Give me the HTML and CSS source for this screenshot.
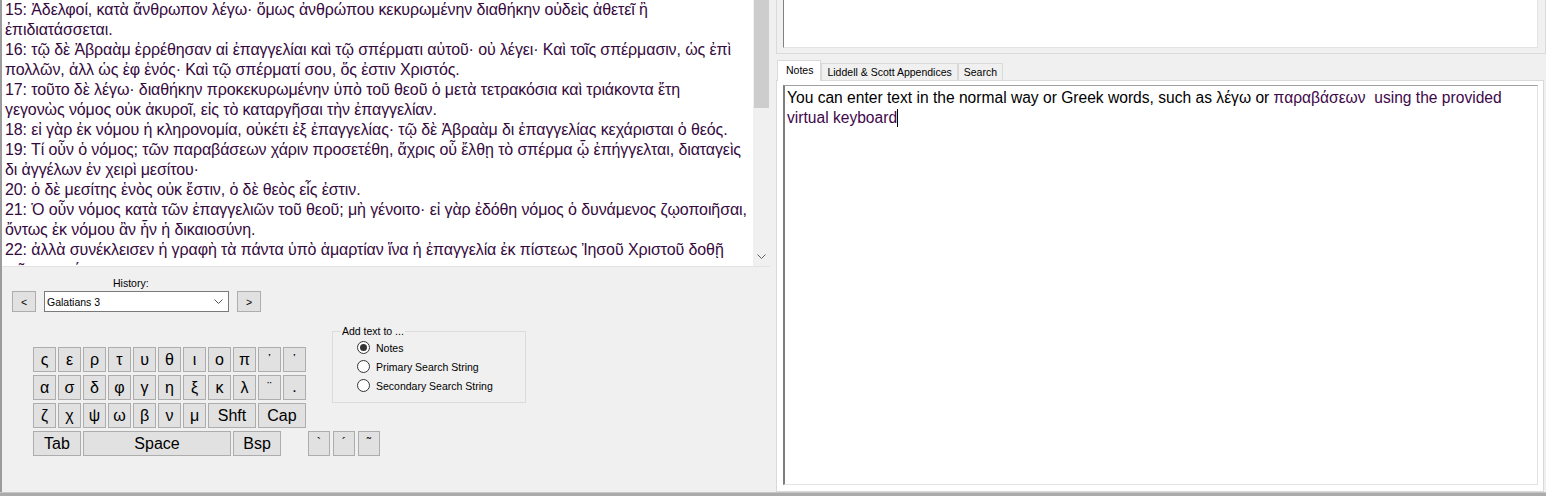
FILE: index.html
```html
<!DOCTYPE html>
<html lang="el">
<head>
<meta charset="utf-8">
<title>Greek Reader</title>
<link rel="stylesheet" href="styles.css">
</head>
<body>
<div class="window">
  <div class="main">
    <section class="left">
      <div class="reader">
        <div class="verses">
          <p>15: Ἀδελφοί, κατὰ ἄνθρωπον λέγω· ὅμως ἀνθρώπου κεκυρωμένην διαθήκην οὐδεὶς ἀθετεῖ ἢ<br>ἐπιδιατάσσεται.</p>
          <p>16: τῷ δὲ Ἀβραὰμ ἐρρέθησαν αἱ ἐπαγγελίαι καὶ τῷ σπέρματι αὐτοῦ· οὐ λέγει· Καὶ τοῖς σπέρμασιν, ὡς ἐπὶ<br>πολλῶν, ἀλλ ὡς ἐφ ἑνός· Καὶ τῷ σπέρματί σου, ὅς ἐστιν Χριστός.</p>
          <p>17: τοῦτο δὲ λέγω· διαθήκην προκεκυρωμένην ὑπὸ τοῦ θεοῦ ὁ μετὰ τετρακόσια καὶ τριάκοντα ἔτη<br>γεγονὼς νόμος οὐκ ἀκυροῖ, εἰς τὸ καταργῆσαι τὴν ἐπαγγελίαν.</p>
          <p>18: εἰ γὰρ ἐκ νόμου ἡ κληρονομία, οὐκέτι ἐξ ἐπαγγελίας· τῷ δὲ Ἀβραὰμ δι ἐπαγγελίας κεχάρισται ὁ θεός.</p>
          <p>19: Τί οὖν ὁ νόμος; τῶν παραβάσεων χάριν προσετέθη, ἄχρις οὗ ἔλθῃ τὸ σπέρμα ᾧ ἐπήγγελται, διαταγεὶς<br>δι ἀγγέλων ἐν χειρὶ μεσίτου·</p>
          <p>20: ὁ δὲ μεσίτης ἑνὸς οὐκ ἔστιν, ὁ δὲ θεὸς εἷς ἐστιν.</p>
          <p>21: Ὁ οὖν νόμος κατὰ τῶν ἐπαγγελιῶν τοῦ θεοῦ; μὴ γένοιτο· εἰ γὰρ ἐδόθη νόμος ὁ δυνάμενος ζῳοποιῆσαι,<br>ὄντως ἐκ νόμου ἂν ἦν ἡ δικαιοσύνη.</p>
          <p>22: ἀλλὰ συνέκλεισεν ἡ γραφὴ τὰ πάντα ὑπὸ ἁμαρτίαν ἵνα ἡ ἐπαγγελία ἐκ πίστεως Ἰησοῦ Χριστοῦ δοθῇ<br>τοῖς πιστεύουσιν.</p>
        </div>
        <div class="vscroll">
          <div class="thumb"></div>
          <div class="track"></div>
          <svg class="arrow" width="9" height="5" viewBox="0 0 9 5"><polyline points="0.5,0.5 4.5,4.5 8.5,0.5" fill="none" stroke="#606060" stroke-width="1"/></svg>
        </div>
      </div>
      <div class="controls">
        <div class="history">
          <div class="hist-label">History:</div>
          <button class="btn nav prev">&lt;</button>
          <div class="combo"><span>Galatians 3</span><svg width="9" height="5" viewBox="0 0 9 5"><polyline points="0.5,0.5 4.5,4.5 8.5,0.5" fill="none" stroke="#555" stroke-width="1"/></svg></div>
          <button class="btn nav next">&gt;</button>
        </div>
        <div class="lower">
          <div class="keys">
            <div class="krow">
              <button class="btn key">ς</button><button class="btn key">ε</button><button class="btn key">ρ</button><button class="btn key">τ</button><button class="btn key">υ</button><button class="btn key">θ</button><button class="btn key">ι</button><button class="btn key">ο</button><button class="btn key">π</button><button class="btn key mark">᾿</button><button class="btn key mark">῾</button>
            </div>
            <div class="krow">
              <button class="btn key">α</button><button class="btn key">σ</button><button class="btn key">δ</button><button class="btn key">φ</button><button class="btn key">γ</button><button class="btn key">η</button><button class="btn key">ξ</button><button class="btn key">κ</button><button class="btn key">λ</button><button class="btn key mark">¨</button><button class="btn key dot">.</button>
            </div>
            <div class="krow">
              <button class="btn key">ζ</button><button class="btn key">χ</button><button class="btn key">ψ</button><button class="btn key">ω</button><button class="btn key">β</button><button class="btn key">ν</button><button class="btn key">μ</button><button class="btn key w2">Shft</button><button class="btn key w2">Cap</button>
            </div>
            <div class="krow">
              <button class="btn key w2">Tab</button><button class="btn key space">Space</button><button class="btn key w2">Bsp</button>
              <div class="accents">
                <button class="btn key acc mark">`</button><button class="btn key acc mark">´</button><button class="btn key acc mark">῀</button>
              </div>
            </div>
          </div>
          <div class="groupbox">
            <div class="gb-title">Add text to ...</div>
            <div class="radio-row"><span class="radio checked"></span><span>Notes</span></div>
            <div class="radio-row"><span class="radio"></span><span>Primary Search String</span></div>
            <div class="radio-row"><span class="radio"></span><span>Secondary Search String</span></div>
          </div>
        </div>
      </div>
    </section>
    <div class="splitter"></div>
    <section class="right">
      <div class="top-panel"><div class="top-box"></div></div>
      <div class="tabs">
        <div class="tab active">Notes</div>
        <div class="tab">Liddell &amp; Scott Appendices</div>
        <div class="tab">Search</div>
      </div>
      <div class="tabpage">
        <div class="notes">You can enter text in the normal way or Greek words, such as λέγω or <span class="tinted">παραβάσεων &nbsp;using the provided virtual keyboard</span><span class="caret"></span></div>
      </div>
    </section>
  </div>
  <div class="statusbar"></div>
</div>
</body>
</html>
```

FILE: styles.css
```css
* { box-sizing: border-box; }
body {
  margin: 0;
  background: #f0f0f0;
  font-family: "Liberation Sans", "DejaVu Sans", sans-serif;
  color: #000;
}
.window {
  width: 1546px;
  height: 496px;
  display: flex;
  flex-direction: column;
  overflow: hidden;
}
.main {
  height: 492px;
  display: flex;
}
.left {
  width: 770px;
  border-left: 2px solid #9b9b9b;
  display: flex;
  flex-direction: column;
}
.reader {
  height: 267px;
  display: flex;
  background: #fff;
  border-bottom: 1px solid #e3e3e3;
}
.verses {
  flex: 1;
  overflow: hidden;
  padding-left: 3px;
  font-size: 16px;
  line-height: 20px;
  letter-spacing: -0.1px;
  color: #360a40;
  white-space: nowrap;
}
.verses p { margin: 0; }
.vscroll {
  width: 17px;
  background: #f0f0f0;
  display: flex;
  flex-direction: column;
  align-items: center;
}
.thumb {
  width: 15px;
  height: 108px;
  background: #cdcdcd;
}
.track { flex: 1; }
.arrow { margin-bottom: 7px; }

.controls {
  flex: 1;
  padding: 10px 0 0 10px;
}
.btn {
  background: #e1e1e1;
  border: 1px solid #adadad;
  font-family: inherit;
  color: #000;
  padding: 0;
  margin: 0;
  display: flex;
  align-items: center;
  justify-content: center;
}
.history {
  display: grid;
  grid-template-columns: 24px 185px 24px;
  column-gap: 8px;
  row-gap: 1px;
  align-items: center;
}
.hist-label {
  grid-column: 2;
  grid-row: 1;
  font-size: 10.5px;
  line-height: 13px;
  padding-left: 69px;
}
.nav {
  height: 21px;
  font-size: 10.5px;
  grid-row: 2;
}
.nav.prev { grid-column: 1; }
.nav.next { grid-column: 3; }
.combo {
  grid-column: 2;
  grid-row: 2;
  height: 21px;
  border: 1px solid #7a7a7a;
  background: #fff;
  display: flex;
  align-items: center;
  justify-content: space-between;
  padding: 0 5px 0 2px;
  font-size: 10.5px;
}

.lower {
  display: flex;
  align-items: flex-start;
  margin-top: 19px;
  padding-left: 21px;
}
.keys {
  width: 273px;
  flex-shrink: 0;
  margin-top: 16px;
  display: flex;
  flex-direction: column;
  gap: 3px;
}
.krow {
  display: flex;
  gap: 2px;
}
.key {
  width: 23px;
  height: 25px;
  flex-shrink: 0;
  font-size: 16px;
}
.key.w2 { width: 48px; }
.key.space { width: 148px; }
.key.mark {
  align-items: flex-start;
  padding-top: 3px;
  font-size: 13px;
}
.key.dot {
  align-items: flex-end;
  padding-bottom: 3px;
}
.accents {
  display: flex;
  gap: 3px;
  margin-left: 25px;
  flex-shrink: 0;
}
.key.acc { width: 22px; }

.groupbox {
  margin-left: 26px;
  width: 194px;
  height: 72px;
  border: 1px solid #dcdcdc;
  font-size: 10.5px;
}
.gb-title {
  width: max-content;
  margin: -7px 0 0 8px;
  padding: 0 1px;
  line-height: 13px;
  background: #f0f0f0;
}
.radio-row {
  height: 19px;
  display: flex;
  align-items: center;
  gap: 6px;
  padding-left: 24px;
}
.radio {
  width: 13px;
  height: 13px;
  border: 1px solid #333;
  border-radius: 50%;
  background: #fff;
  display: flex;
  align-items: center;
  justify-content: center;
}
.radio.checked::after {
  content: "";
  width: 7px;
  height: 7px;
  border-radius: 50%;
  background: #333;
}

.splitter { width: 6px; }

.right {
  width: 770px;
  display: flex;
  flex-direction: column;
}
.top-panel {
  width: 770px;
  height: 54px;
  border: 1px solid #dadada;
  border-top: 0;
  padding: 0 7px 5px 6px;
}
.top-box {
  height: 48px;
  background: #fff;
  border-left: 1px solid #828282;
  border-right: 1px solid #e3e3e3;
  border-bottom: 1px solid #e3e3e3;
}
.tabs {
  margin-top: 6px;
  height: 20px;
  display: flex;
  align-items: flex-end;
  padding-left: 1px;
}
.tab {
  height: 17px;
  padding: 0 5px;
  font-size: 10.5px;
  line-height: 16px;
  border: 1px solid #d9d9d9;
  border-bottom: 0;
  background: #f0f0f0;
  white-space: nowrap;
}
.tab.active {
  height: 21px;
  line-height: 18px;
  padding: 0 7px 0 8px;
  background: #fff;
  margin-bottom: -1px;
  position: relative;
  z-index: 1;
}
.tabpage {
  width: 768px;
  height: 412px;
  border: 1px solid #d9d9d9;
  background: #fff;
  padding: 4px 5px 6px 6px;
}
.notes {
  height: 100%;
  border-top: 1px solid #a0a0a0;
  border-left: 2px solid #7d7d7d;
  border-right: 1px solid #e3e3e3;
  border-bottom: 1px solid #e3e3e3;
  padding: 2px 2px;
  font-size: 15.6px;
  line-height: 20px;
}
.tinted { color: #40084a; }
.caret {
  display: inline-block;
  width: 1px;
  height: 18px;
  background: #000;
  vertical-align: -4px;
}
.statusbar {
  height: 4px;
  background: #ababab;
  border-top: 1px solid #c6c6c6;
}
```
